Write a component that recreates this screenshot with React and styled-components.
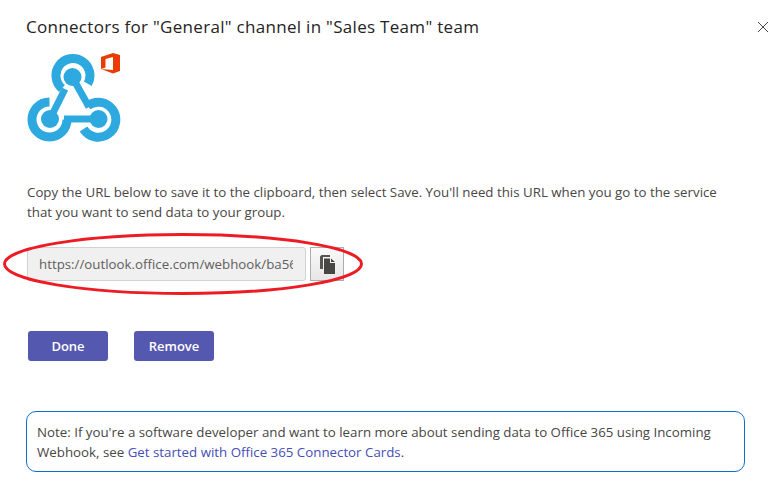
import React from 'react';
import styled, { createGlobalStyle } from 'styled-components';

const Global = createGlobalStyle`
  html, body { margin: 0; padding: 0; background: #fff; }
  body { font-family: "Open Sans", "Noto Sans", sans-serif; color: #484644; }
`;

const Dialog = styled.div`
  width: 775px;
  height: 491px;
  box-sizing: border-box;
  padding: 17px 30px 0 26px;
  overflow: hidden;
`;

const Header = styled.div`
  display: flex;
  justify-content: space-between;
  align-items: center;
  height: 20px;
`;

const Title = styled.h1`
  margin: 0;
  font-size: 17px;
  font-weight: 500;
  line-height: 20px;
  letter-spacing: 0.3px;
  color: #252423;
  white-space: nowrap;
`;

const CloseButton = styled.button`
  display: flex;
  width: 10px;
  height: 10px;
  margin-right: -23px;
  padding: 0;
  border: 0;
  background: none;
`;

const Logo = styled.svg`
  display: block;
  margin: 16px 0 0 1px;
`;

const Description = styled.p`
  margin: 39px 0 0 1px;
  font-size: 13.3px;
  line-height: 20px;
  color: #484644;
  white-space: nowrap;
`;

const UrlRow = styled.div`
  position: relative;
  display: flex;
  gap: 4px;
  margin: 25px 0 0 1px;
`;

const UrlInput = styled.input`
  width: 279px;
  height: 34px;
  box-sizing: border-box;
  padding: 0 12px 0 11px;
  border: 1px solid #d2d2d2;
  border-radius: 3px;
  background: #f0f0f0;
  font: 13.3px "Open Sans", "Noto Sans", sans-serif;
  color: #605e5c;
  outline: none;
`;

const CopyButton = styled.button`
  display: flex;
  align-items: center;
  justify-content: center;
  width: 34px;
  height: 34px;
  padding: 0;
  border: 1px solid #adadad;
  background: linear-gradient(#fafafa, #e6e6e6);
`;

const Highlight = styled.svg`
  position: absolute;
  left: -24px;
  top: -14px;
`;

const Actions = styled.div`
  display: flex;
  gap: 26px;
  margin: 50px 0 0 2px;
`;

const PrimaryButton = styled.button`
  width: 80px;
  height: 30px;
  padding: 0;
  border: 0;
  border-radius: 3px;
  background: #5558af;
  color: #fff;
  font: 600 13px "Open Sans", "Noto Sans", sans-serif;
`;

const Note = styled.div`
  width: 719px;
  height: 61px;
  box-sizing: border-box;
  margin-top: 50px;
  padding: 10px 10px;
  border: 1px solid #0f6fc6;
  border-radius: 10px;
  font-size: 13.3px;
  line-height: 20px;
  color: #484644;
  white-space: nowrap;
`;

const NoteLink = styled.a`
  color: #464eb8;
  text-decoration: none;
`;

function WebhookLogo() {
  return (
    <Logo width="94" height="90" viewBox="27 54 94 90">
      <g fill="none" stroke="#2ea9df" strokeWidth="9">
        <path d="M87.8 84.8 A17 17 0 1 0 62 89.5" />
        <path d="M87.6 106.8 A17.5 17.5 0 1 1 83.5 130" />
        <path d="M49.5 103 A17.5 17.5 0 1 0 67 120.5" />
      </g>
      <g fill="none" stroke="#2ea9df" strokeWidth="7">
        <path d="M50 120 L65 90" />
        <path d="M72.5 78.5 L89 108" />
        <path d="M64 120 L98.5 120" />
      </g>
      <g fill="#2ea9df">
        <circle cx="72.5" cy="78" r="9" />
        <circle cx="50" cy="120" r="9" />
        <circle cx="98.5" cy="120" r="9" />
      </g>
      <path
        fill="#eb3c00"
        d="M101 58 L113 54 L120 56 V72 L113 74.5 L101 70 L113 71 V58 L105.5 60 V68.5 L101 70 Z"
      />
    </Logo>
  );
}

export default function App() {
  return (
    <>
      <Global />
      <Dialog>
        <Header>
          <Title>Connectors for "General" channel in "Sales Team" team</Title>
          <CloseButton aria-label="Close">
            <svg width="10" height="10" viewBox="0 0 10 10">
              <path d="M0 0 L10 10 M10 0 L0 10" stroke="#484644" strokeWidth="1" />
            </svg>
          </CloseButton>
        </Header>
        <WebhookLogo />
        <Description>
          Copy the URL below to save it to the clipboard, then select Save. You'll need this URL when you go to the service
          <br />
          that you want to send data to your group.
        </Description>
        <UrlRow>
          <UrlInput readOnly value="https://outlook.office.com/webhook/ba56e1d7-4c0a" />
          <CopyButton aria-label="Copy">
            <svg width="15" height="19" viewBox="0 0 15 19">
              <path fill="#555" d="M1.5 0 H10 V2 H3 V14 H0 V1.5 Z" />
              <path fill="#484644" d="M4 3.5 H10 V8 H15 V19 H4 Z M11 3.5 L15 7 H11 Z" />
            </svg>
          </CopyButton>
          <Highlight width="360" height="62" viewBox="0 0 360 62">
            <ellipse cx="180" cy="31" rx="178.5" ry="29.5" fill="none" stroke="#ed1c24" strokeWidth="3" />
          </Highlight>
        </UrlRow>
        <Actions>
          <PrimaryButton>Done</PrimaryButton>
          <PrimaryButton>Remove</PrimaryButton>
        </Actions>
        <Note>
          Note: If you're a software developer and want to learn more about sending data to Office 365 using Incoming
          <br />
          Webhook, see <NoteLink href="#">Get started with Office 365 Connector Cards</NoteLink>.
        </Note>
      </Dialog>
    </>
  );
}
